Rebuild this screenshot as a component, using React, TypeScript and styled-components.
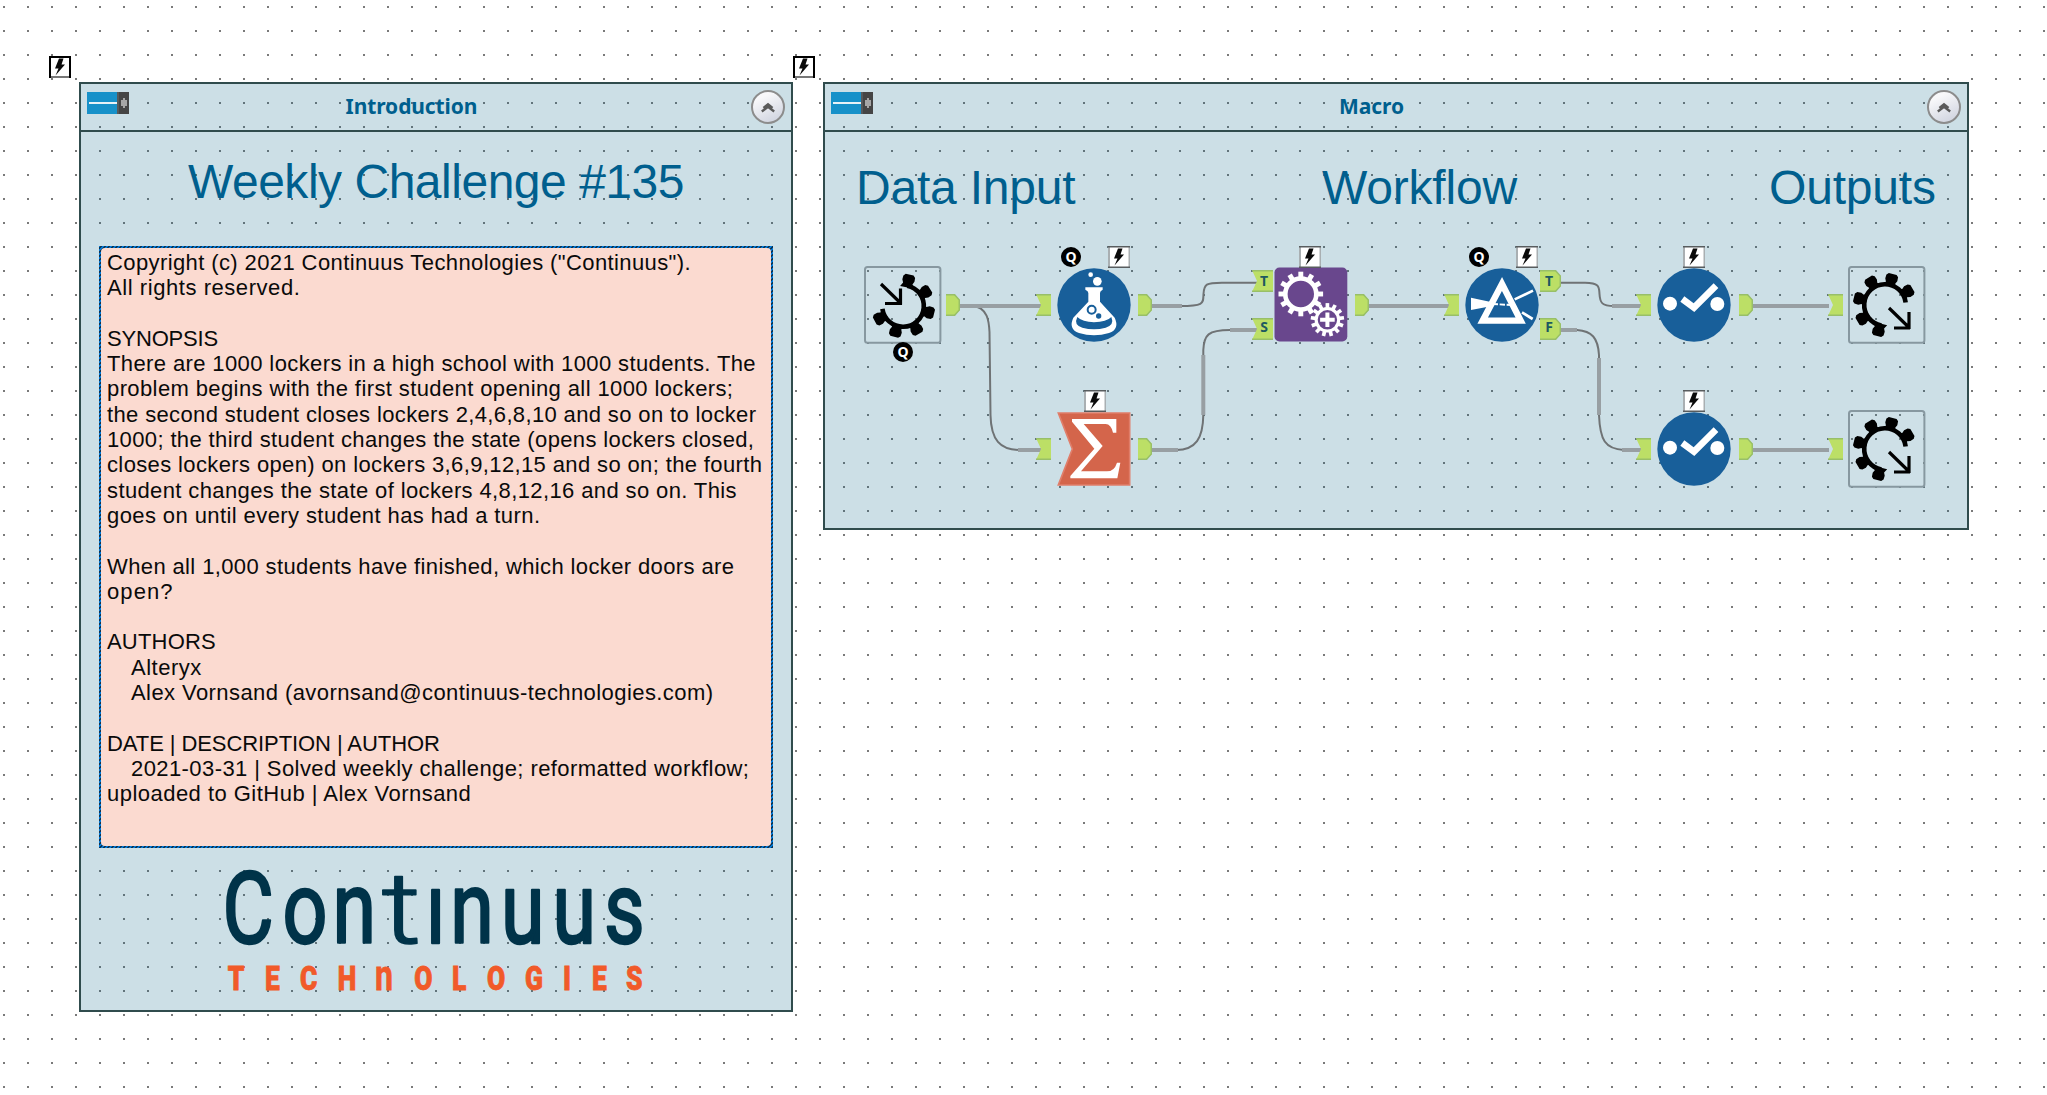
import React from "react";
import styled, { createGlobalStyle } from "styled-components";

const GlobalStyle = createGlobalStyle`
  body { margin: 0; background: #fff; }
`;

const ORIGIN_X = 825;
const ORIGIN_Y = 230;

const dots = (hex: string) => `
  background-image: url("data:image/svg+xml,%3Csvg xmlns='http://www.w3.org/2000/svg' width='24' height='24'%3E%3Crect width='2' height='2' fill='%23${hex}'/%3E%3C/svg%3E");
  background-size: 24px 24px;
  background-position: 3px 6px;
  background-attachment: fixed;
`;

const Canvas = styled.main`
  box-sizing: border-box;
  width: 2047px;
  height: 1095px;
  overflow: hidden;
  padding: 82px 0 0 79px;
  display: flex;
  align-items: flex-start;
  gap: 30px;
  background-color: #fff;
  font-family: "Liberation Sans", Arial, sans-serif;
  ${dots("7a7a7a")}
`;

const Panel = styled.section<{ $w: number; $h: number }>`
  position: relative;
  box-sizing: border-box;
  flex: none;
  display: flex;
  flex-direction: column;
  width: ${(p) => p.$w}px;
  height: ${(p) => p.$h}px;
  border: 2px solid #304c4d;
  background-color: #ccdfe6;
  ${dots("62747b")}
`;

const Header = styled.header`
  flex: none;
  box-sizing: border-box;
  height: 48px;
  display: flex;
  align-items: center;
  padding: 0 6px;
  border-bottom: 2px solid #304c4d;
`;

const HeaderIcon = styled.svg`
  align-self: flex-start;
  width: 42px;
  height: 22px;
  margin-top: 8px;
`;

const HeaderTitle = styled.h2`
  flex: 1;
  margin: 0;
  padding: 0 57px 2px 0;
  text-align: center;
  font: 700 21px/44px "Noto Sans", "Open Sans", sans-serif;
  letter-spacing: -0.1px;
  color: #005f8e;
`;

const PanelTitle = styled.h1<{ $spacing?: number }>`
  margin: 0;
  font-weight: 400;
  font-size: 48px;
  line-height: 56px;
  letter-spacing: ${(p) => p.$spacing ?? -0.2}px;
  color: #005f8e;
  white-space: nowrap;
`;

const IntroBody = styled.div`
  display: flex;
  flex-direction: column;
  align-items: center;
  padding-top: 22px;
`;

const Note = styled.div`
  box-sizing: border-box;
  width: 674px;
  height: 602px;
  margin: 36px 0 0;
  padding: 2px;
  background: repeating-linear-gradient(135deg, #0078d7 0 1.414px, #0c3555 1.414px 2.828px);
`;

const NoteText = styled.div`
  box-sizing: border-box;
  height: 100%;
  padding: 2px 0 0 6px;
  border-radius: 4px;
  background: #fbdad0;
  color: #0a0a0a;
`;

const Line = styled.div<{ $spacing: number; $indent?: boolean }>`
  height: 25.3px;
  padding-left: ${(p) => (p.$indent ? 24 : 0)}px;
  font-size: 22px;
  line-height: 25.3px;
  letter-spacing: ${(p) => p.$spacing}px;
  white-space: nowrap;
`;

const Logo = styled.svg`
  display: block;
  width: 440px;
  height: 150px;
`;

const Headings = styled.div`
  display: grid;
  grid-template-columns: 466px 447px auto;
  height: 70px;
  padding: 28px 0 0 31px;
`;

const Diagram = styled.div`
  position: relative;
  flex: 1;
`;

const Wires = styled.svg`
  display: block;
  width: 1142px;
  height: 298px;
`;

const Place = styled.div<{ $x: number; $y: number }>`
  position: absolute;
  left: ${(p) => p.$x - ORIGIN_X}px;
  top: ${(p) => p.$y - ORIGIN_Y}px;
  line-height: 0;
`;

const CornerBadge = styled.div`
  position: absolute;
  left: -32px;
  top: -28px;
  line-height: 0;
`;

const QBadge = styled.div`
  width: 20px;
  height: 20px;
  border-radius: 50%;
  background: #000;
  color: #fff;
  text-align: center;
  font: 700 14px/20px "Noto Sans", sans-serif;
`;

const PortLabel = styled.span<{ $out?: boolean; $y: number }>`
  position: absolute;
  left: 0;
  top: ${(p) => p.$y}px;
  width: ${(p) => (p.$out ? 18 : 24)}px;
  text-align: center;
  font: 700 14px/21px "Noto Sans", sans-serif;
  color: #1d5a60;
`;

function Bolt({ strong }: { strong?: boolean }) {
  return (
    <svg width="22" height="22" viewBox="0 0 22 22">
      <rect width="22" height="22" fill="#fff" />
      {strong ? (
        <>
          <path d="M1 22V1H21V22" fill="none" stroke="#000" strokeWidth="2" />
          <path d="M2 21H20" stroke="#777" strokeWidth="2" />
        </>
      ) : (
        <>
          <path d="M1 0V22M21.5 0V22" stroke="#a9afb2" strokeWidth="2" />
          <path d="M0 .75H22M0 21.25H22" stroke="#585c5e" strokeWidth="1.5" />
        </>
      )}
      <path d="M10 2.5H14.5L12.5 8.5H16L6.5 19.5L9.5 12.5H6Z" fill="#0a0a0a" />
    </svg>
  );
}

function ToolIcon() {
  return (
    <HeaderIcon viewBox="0 0 42 22">
      <rect width="31" height="22" fill="#1791c9" />
      <rect x="30" width="2" height="22" fill="#56595b" />
      <rect x="32" width="10" height="22" fill="#454545" />
      <rect x="2" y="10" width="28" height="2" fill="#e8f2f7" />
      <path d="M36 6H38V8H40V14H38V16H36V14H34V8H36Z" fill="#a6a6a6" />
    </HeaderIcon>
  );
}

function Collapse() {
  return (
    <svg width="34" height="34" viewBox="0 0 34 34">
      <defs>
        <linearGradient id="btn" x1="0.2" y1="0" x2="0.7" y2="1">
          <stop offset="0.2" stopColor="#f8f8fa" />
          <stop offset="1" stopColor="#cfd3df" />
        </linearGradient>
      </defs>
      <circle cx="17" cy="17" r="16" fill="url(#btn)" stroke="#8c8c8c" strokeWidth="2" />
      <path d="M12.5 18L17 14.2L21.5 18M10.8 21.5L17 16.8L23.2 21.5" fill="none" stroke="#5a5a5a" strokeWidth="2.4" />
    </svg>
  );
}

const rad = (d: number) => (d * Math.PI) / 180;

function BrokenGear({ cx, cy, angles, from, to }: { cx: number; cy: number; angles: number[]; from: number; to: number }) {
  const r = 20.8;
  const a0 = rad(from);
  const a1 = rad(to);
  return (
    <g>
      <path
        d={`M${cx + r * Math.cos(a0)} ${cy + r * Math.sin(a0)}A${r} ${r} 0 1 1 ${cx + r * Math.cos(a1)} ${cy + r * Math.sin(a1)}`}
        fill="none"
        stroke="#000"
        strokeWidth="4.6"
      />
      {angles.map((a) => (
        <path
          key={a}
          transform={`translate(${cx} ${cy}) rotate(${a})`}
          d="M19 -7L23 -4.8L26 -6.2L30 -6L32 -4L32 4L30 6L26 6.2L23 4.8L19 7Z"
        />
      ))}
    </g>
  );
}

function InterfaceTool({ output }: { output?: boolean }) {
  return (
    <svg width="78" height="78" viewBox="0 0 78 78">
      <rect x="1" y="1" width="75.4" height="75.8" rx="2.5" fill="rgba(255,255,255,0.05)" stroke="#8798a0" strokeWidth="2" />
      {output ? (
        <>
          <BrokenGear cx={37} cy={39} angles={[104, 149, 194, 239, 284, 329]} from={100} to={353} />
          <path d="M41 42L60 60.5M46 62H62M61 46V63" fill="none" stroke="#000" strokeWidth="3.2" />
        </>
      ) : (
        <>
          <BrokenGear cx={39} cy={40} angles={[-78, -32, 14, 60, 106, 152]} from={-78} to={172} />
          <path d="M17 18L36 36.5M21 37.5H38M36.5 22.5V38.5" fill="none" stroke="#000" strokeWidth="3.2" />
        </>
      )}
    </svg>
  );
}

function RoundTool({ children }: { children: React.ReactNode }) {
  return (
    <svg width="74" height="74" viewBox="-111 -111 222 222">
      <circle r="110" fill="#185f9a" />
      {children}
    </svg>
  );
}

function Formula() {
  return (
    <RoundTool>
      <g fill="#fff">
        <circle cx="10" cy="-71" r="13" />
        <circle cx="-10" cy="-91" r="7" />
        <path d="M-26 -53H26V-46Q18 -42 18 -36V-10L62 38Q78 72 45 84Q0 98 -45 84Q-78 72 -62 38L-17 -10V-36Q-17 -42 -26 -46Z" />
      </g>
      <g fill="#185f9a">
        <path d="M-50 36Q-62 60 -35 68Q0 78 35 68Q62 60 52 36Q38 51 0 52Q-35 51 -50 36Z" />
        <circle cx="14" cy="33" r="8" />
      </g>
      <circle cx="-7" cy="14" r="12" fill="none" stroke="#185f9a" strokeWidth="6" />
    </RoundTool>
  );
}

function Filter() {
  return (
    <RoundTool>
      <path d="M-93 -22L-30 -8V3L-93 15Z" fill="#fff" />
      <path d="M0 -63L56 47H-58Z" fill="#185f9a" stroke="#fff" strokeWidth="19" />
      <path d="M-28 -3L28 0" stroke="#fff" strokeWidth="6" strokeDasharray="16 5" />
      <path d="M38 -17L93 -43M60 22L92 42" stroke="#fff" strokeWidth="8" />
    </RoundTool>
  );
}

function Select() {
  return (
    <RoundTool>
      <circle cx="-72" cy="-4" r="21" fill="#fff" />
      <circle cx="70" cy="-3" r="21" fill="#fff" />
      <path d="M-35 -18L0 8L66 -58" fill="none" stroke="#185f9a" strokeWidth="30" />
      <path d="M-35 -18L0 8L66 -58" fill="none" stroke="#fff" strokeWidth="20" />
    </RoundTool>
  );
}

function Summarize() {
  return (
    <svg width="74" height="74" viewBox="0 0 222 222">
      <path d="M4 3H218V219H4L46 111Z" fill="#d4654b" stroke="#e07e6a" strokeWidth="5" />
      <path
        d="M45 21H178V62H168Q162 36 146 36H80L137 102L72 178H150Q172 178 180 152H190L181 199H40V192L112 110L45 29Z"
        fill="#fff"
      />
    </svg>
  );
}

function Cog({ cx, cy, inner, outer, tip, teeth }: { cx: number; cy: number; inner: number; outer: number; tip: number; teeth: number }) {
  return (
    <g transform={`translate(${cx} ${cy})`}>
      <circle r={(inner + outer) / 2} fill="none" stroke="#fff" strokeWidth={outer - inner} />
      {Array.from({ length: teeth }, (_, i) => (
        <rect key={i} x={outer - 1} y={-tip * 0.11} width={tip - outer + 1} height={tip * 0.22} fill="#fff" transform={`rotate(${(i * 360) / teeth - 90})`} />
      ))}
    </g>
  );
}

function Macro() {
  return (
    <svg width="74" height="75" viewBox="0 0 74 75">
      <rect x=".5" y=".5" width="72.8" height="74" rx="5" fill="#69478d" />
      <Cog cx={26.8} cy={27} inner={13.2} outer={17.8} tip={22.3} teeth={12} />
      <circle cx="53.4" cy="52.8" r="16" fill="#69478d" />
      <Cog cx={53.4} cy={52.8} inner={9.7} outer={12.8} tip={16.7} teeth={13} />
      <path d="M53.4 45.5V60.1M46.1 52.8H60.7" stroke="#fff" strokeWidth="4" />
    </svg>
  );
}

function Port({ x, y, out, label, labelY = 0 }: { x: number; y: number; out?: boolean; label?: string; labelY?: number }) {
  const w = label ? 21 : out ? 14 : 15;
  const d = out
    ? `M0 0H${w - 6}L${w} 6V16L${w - 6} 22H0Z`
    : `M0 0H${w}V22H0L5 11Z`;
  return (
    <Place $x={x} $y={y}>
      <svg width={w} height="22" viewBox={`0 0 ${w} 22`}>
        <path d={d} fill="#bcdf66" />
        <path d={`M0 .75H${out ? w - 5 : w}M0 21.25H${out ? w - 5 : w}`} stroke="#98bf68" strokeWidth="1.5" />
        {out && <path d={`M${w - 6} 0L${w - 0.7} 6V16L${w - 6} 22`} fill="none" stroke="#98bf68" strokeWidth="1.5" />}
      </svg>
      {label && <PortLabel $out={out} $y={labelY}>{label}</PortLabel>}
    </Place>
  );
}

const thinWires = [
  "M960 306H972C988 307 989 322 989.5 332L990.5 415C991 440 1000 450 1020 450H1042",
  "M1152 306H1180C1205 306 1203 303 1203.5 294C1204 284 1206 282.7 1222 282.7H1258",
  "M1152 450H1176C1196 450 1203 438 1203.3 415V350C1204 335 1208 330 1230 330H1258",
  "M1561 282.7H1585C1600 283 1599 287 1599.5 294C1600 303 1602 306 1614 306H1642",
  "M1561 330H1577C1592 331 1598 338 1599 355V415C1600 440 1605 449 1624 450H1642",
];

const thickWires = [
  "M960 306H1041",
  "M1018 450H1041",
  "M1152 306H1182",
  "M1152 450H1178",
  "M1203.3 355V415",
  "M1230 330H1258",
  "M1368 306H1449",
  "M1561 330H1577",
  "M1599 358V415",
  "M1612 306H1641",
  "M1622 450H1641",
  "M1752 306H1829",
  "M1752 450H1829",
];

const lines: { text: string; spacing?: number; indent?: boolean }[] = [
  { text: 'Copyright (c) 2021 Continuus Technologies ("Continuus").', spacing: 0.396 },
  { text: "All rights reserved.", spacing: 0.56 },
  { text: "" },
  { text: "SYNOPSIS", spacing: -0.2 },
  { text: "There are 1000 lockers in a high school with 1000 students. The", spacing: 0.388 },
  { text: "problem begins with the first student opening all 1000 lockers;", spacing: 0.392 },
  { text: "the second student closes lockers 2,4,6,8,10 and so on to locker", spacing: 0.363 },
  { text: "1000; the third student changes the state (opens lockers closed,", spacing: 0.369 },
  { text: "closes lockers open) on lockers 3,6,9,12,15 and so on; the fourth", spacing: 0.374 },
  { text: "student changes the state of lockers 4,8,12,16 and so on. This", spacing: 0.383 },
  { text: "goes on until every student has had a turn.", spacing: 0.409 },
  { text: "" },
  { text: "When all 1,000 students have finished, which locker doors are", spacing: 0.381 },
  { text: "open?", spacing: 1.1 },
  { text: "" },
  { text: "AUTHORS", spacing: 0.2 },
  { text: "Alteryx", spacing: 0.5, indent: true },
  { text: "Alex Vornsand (avornsand@continuus-technologies.com)", spacing: 0.423, indent: true },
  { text: "" },
  { text: "DATE | DESCRIPTION | AUTHOR", spacing: -0.08 },
  { text: "2021-03-31 | Solved weekly challenge; reformatted workflow;", spacing: 0.415, indent: true },
  { text: "uploaded to GitHub | Alex Vornsand", spacing: 0.473 },
];

function PanelHeader({ title }: { title: string }) {
  return (
    <Header>
      <ToolIcon />
      <HeaderTitle>{title}</HeaderTitle>
      <Collapse />
    </Header>
  );
}

function CompanyLogo() {
  return (
    <Logo viewBox="215 850 440 150">
      <g transform="translate(0 2.5) scale(0.78 1)" fill="#003349" stroke="#003349" strokeWidth="2.5" strokeLinejoin="round" fontFamily="Roboto" fontSize="101">
        <text y="943" x="284 361 425">
          Con
          <tspan x="488" textLength="51" lengthAdjust="spacingAndGlyphs" fontWeight="300" strokeWidth="1.5">t</tspan>
          <tspan x="545 576 641 707 773">ınuus</tspan>
        </text>
      </g>
      <g transform="translate(0 3) scale(0.8 1)" fill="#f15a29" stroke="#f15a29" strokeWidth="0.8" fontFamily="Roboto" fontWeight="900" fontSize="33">
        <text y="989.5" x="283.5 330 373.7 421">
          TECH
          <tspan x="467.5" fontSize="43" fontWeight="700" textLength="22.5" lengthAdjust="spacingAndGlyphs">n</tspan>
          <tspan x="516.5 563.8 607.5 655 702.5 738.8 781.3">OLOGIES</tspan>
        </text>
      </g>
    </Logo>
  );
}

export default function App() {
  return (
    <Canvas>
      <GlobalStyle />
      <Panel $w={714} $h={930}>
        <CornerBadge>
          <Bolt strong />
        </CornerBadge>
        <PanelHeader title="Introduction" />
        <IntroBody>
          <PanelTitle $spacing={-0.48}>Weekly Challenge #135</PanelTitle>
          <Note>
            <NoteText>
              {lines.map((l, i) => (
                <Line key={i} $spacing={l.spacing ?? 0} $indent={l.indent}>
                  {l.text}
                </Line>
              ))}
            </NoteText>
          </Note>
          <CompanyLogo />
        </IntroBody>
      </Panel>
      <Panel $w={1146} $h={448}>
        <CornerBadge>
          <Bolt strong />
        </CornerBadge>
        <PanelHeader title="Macro" />
        <Headings>
          <PanelTitle>Data Input</PanelTitle>
          <PanelTitle>Workflow</PanelTitle>
          <PanelTitle>Outputs</PanelTitle>
        </Headings>
        <Diagram>
          <Wires viewBox="825 230 1142 298">
            {thinWires.map((d) => (
              <path key={d} d={d} fill="none" stroke="#6f7375" strokeWidth="2" />
            ))}
            {thickWires.map((d) => (
              <path key={d} d={d} fill="none" stroke="#989fa3" strokeWidth="4" />
            ))}
          </Wires>
          <Place $x={864} $y={266}><InterfaceTool /></Place>
          <Place $x={893} $y={342}><QBadge>Q</QBadge></Place>
          <Port x={946} y={294} out />
          <Port x={1036} y={294} />
          <Place $x={1057} $y={268}><Formula /></Place>
          <Place $x={1061} $y={247}><QBadge>Q</QBadge></Place>
          <Place $x={1108} $y={246}><Bolt /></Place>
          <Port x={1138} y={294} out />
          <Port x={1036} y={438} />
          <Place $x={1057} $y={412}><Summarize /></Place>
          <Place $x={1084} $y={390}><Bolt /></Place>
          <Port x={1138} y={438} out />
          <Port x={1252} y={270} label="T" />
          <Port x={1252} y={318} label="S" labelY={-2} />
          <Place $x={1274} $y={267}><Macro /></Place>
          <Place $x={1299} $y={246}><Bolt /></Place>
          <Port x={1355} y={294} out />
          <Port x={1444} y={294} />
          <Place $x={1465} $y={268}><Filter /></Place>
          <Place $x={1469} $y={247}><QBadge>Q</QBadge></Place>
          <Place $x={1516} $y={246}><Bolt /></Place>
          <Port x={1540} y={270} out label="T" />
          <Port x={1540} y={318} out label="F" labelY={-2} />
          {[0, 144].map((dy) => (
            <React.Fragment key={dy}>
              <Port x={1636} y={294 + dy} />
              <Place $x={1657} $y={268 + dy}><Select /></Place>
              <Place $x={1683} $y={246 + dy}><Bolt /></Place>
              <Port x={1739} y={294 + dy} out />
              <Port x={1828} y={294 + dy} />
              <Place $x={1848} $y={266 + dy}><InterfaceTool output /></Place>
            </React.Fragment>
          ))}
        </Diagram>
      </Panel>
    </Canvas>
  );
}
